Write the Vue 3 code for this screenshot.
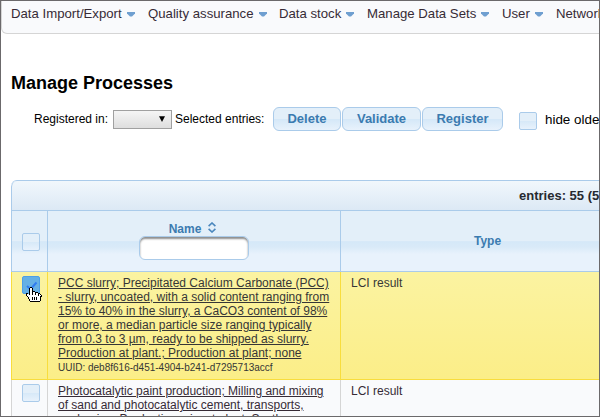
<script setup>
const menu = [
  { label: 'Data Import/Export', w: 137 },
  { label: 'Quality assurance', w: 131 },
  { label: 'Data stock', w: 88 },
  { label: 'Manage Data Sets', w: 135 },
  { label: 'User', w: 54 },
  { label: 'Network', w: 80 },
]
const actions = [
  { label: 'Delete', w: 68 },
  { label: 'Validate', w: 79 },
  { label: 'Register', w: 81 },
]
const rows = [
  {
    selected: true,
    lines: [
      'PCC slurry; Precipitated Calcium Carbonate (PCC)',
      '- slurry, uncoated, with a solid content ranging from',
      '15% to 40% in the slurry, a CaCO3 content of 98%',
      'or more, a median particle size ranging typically',
      'from 0.3 to 3 µm, ready to be shipped as slurry.',
      'Production at plant.; Production at plant; none',
    ],
    uuid: 'deb8f616-d451-4904-b241-d7295713accf',
    type: 'LCI result',
  },
  {
    selected: false,
    lines: [
      'Photocatalytic paint production; Milling and mixing',
      'of sand and photocatalytic cement, transports,',
      'packaging; Production mix, at plant; Synthe',
    ],
    uuid: '',
    type: 'LCI result',
  },
]

// Pointer bitmap: '#' is the outline, 'o' the fill
const pointer = [
  '....##..........',
  '...#oo#.........',
  '...#oo#.........',
  '...#oo#.........',
  '...#oo###.......',
  '...#oo#oo###....',
  '##.#oo#oo#oo##..',
  '#oo#oo#oo#oo#o#.',
  '#ooooooooooo#oo#',
  '.#oooooooooooo##',
  '..#ooo#o#o#ooo#.',
  '..#ooo#o#o#ooo#.',
  '...#oo#o#o#ooo#.',
  '...#oooooooooo#.',
  '....##########..',
]
const pixels = pointer.flatMap((line, y) =>
  [...line].flatMap((c, x) => (c === '.' ? [] : [{ x, y, fill: c === '#' ? '#000' : '#fff' }])),
)
</script>

<template>
  <div class="window">
    <nav class="menubar">
      <a v-for="m in menu" :key="m.label" class="item" :style="{ width: m.w + 'px' }">
        <span>{{ m.label }}</span>
        <svg width="8" height="5" viewBox="0 0 8 5"><path d="M0 0H8V1.4L5 4.5H3L0 1.4Z" fill="#6f9fd0" /></svg>
      </a>
    </nav>
    <h1>Manage Processes</h1>
    <div class="toolbar">
      <span class="label">Registered in:</span>
      <span class="select"><svg width="6" height="6" viewBox="0 0 6 6"><path d="M0 0.2H6L3 6Z" /></svg></span>
      <span class="label selected-label">Selected entries:</span>
      <div class="actions">
        <button v-for="a in actions" :key="a.label" :style="{ width: a.w + 'px' }">{{ a.label }}</button>
      </div>
      <span class="check"></span>
      <span class="hide">hide older</span>
    </div>
    <section class="table">
      <div class="caption"><span>entries: 55 (55)</span></div>
      <div class="row head">
        <div class="cell pick"><span class="check"></span></div>
        <div class="cell name">
          <div class="title">
            <span>Name</span>
            <svg width="8" height="11" viewBox="0 0 8 11" fill="none" stroke="#4b87bd" stroke-width="1.6"><path d="M0.6 4.2L4 1L7.4 4.2M0.6 6.8L4 10L7.4 6.8" /></svg>
          </div>
          <input type="text" />
        </div>
        <div class="cell type">Type</div>
      </div>
      <div v-for="(r, i) in rows" :key="i" class="row body" :class="{ on: r.selected }">
        <div class="cell pick">
          <span class="check">
            <svg v-if="r.selected" class="tick" width="12" height="10" viewBox="0 0 12 10"><path d="M1 5L4.5 8.2L10.5 1.5" fill="none" stroke="#2f7cf0" stroke-width="2" /></svg>
            <svg v-if="r.selected" class="hand" width="16" height="15" viewBox="0 0 16 15" shape-rendering="crispEdges">
              <rect v-for="p in pixels" :key="p.x + '-' + p.y" :x="p.x" :y="p.y" width="1" height="1" :fill="p.fill" />
            </svg>
          </span>
        </div>
        <div class="cell name">
          <a><span v-for="l in r.lines" :key="l">{{ l }}</span></a>
          <small v-if="r.uuid">UUID: {{ r.uuid }}</small>
        </div>
        <div class="cell type">{{ r.type }}</div>
      </div>
    </section>
  </div>
</template>

<style>
body { margin: 0; background: #fff; }
</style>

<style scoped>
* { box-sizing: border-box; }
.window {
  width: 600px; height: 417px; overflow: hidden; background: #fff;
  border: 1px solid #6b696b;
  font-family: "Liberation Sans", Arial, sans-serif; color: #000;
}
.menubar {
  display: flex; width: 660px; height: 33px; padding: 4px 0 0 9px;
  background: #f9fafc; border: 1px solid #d5d5d5; border-top: 0;
  border-radius: 0 0 0 6px;
}
.item {
  display: flex; flex: none; align-items: center; gap: 5px; height: 17px;
  font-size: 13.2px; color: #362b36; white-space: nowrap;
}
.item svg { flex: none; margin-top: 1px; }
h1 { margin: 37px 0 0 10px; font-size: 18px; line-height: 24px; font-weight: bold; }
.toolbar {
  display: flex; align-items: center; width: 700px; height: 26px;
  margin-top: 11px; padding-left: 33px; white-space: nowrap;
}
.label { width: 79px; font-size: 12px; line-height: 16px; }
.selected-label { width: 98px; margin-left: 3px; }
.select {
  display: flex; align-items: center; justify-content: flex-end;
  width: 59px; height: 19px; padding-right: 6px; border: 1px solid #a0a0a0;
  background: linear-gradient(#f5f5f5, #dedede);
}
.actions { display: flex; gap: 1px; }
button {
  height: 24px; padding: 0; border: 1px solid #aacbea; border-radius: 6px;
  background: linear-gradient(#e3eff9 0 48%, #d5e8f8 52%, #e8f2fc);
  color: #3b7bb0; font: bold 13px/20px "Liberation Sans", Arial, sans-serif;
}
.check {
  position: relative; display: block; flex: none; width: 18px; height: 18px;
  border: 1px solid #aacbea; border-radius: 2px;
  background: linear-gradient(#e3eff9 0 48%, #d7e9f8 52%, #e8f2fc);
}
.toolbar .check { margin: 3px 0 0 16px; }
.hide { margin: 1px 0 0 8px; font-size: 13.4px; }
.table {
  width: 954px; margin: 48px 0 0 10px; border: 1px solid #aacbea; border-radius: 6px 0 0 0;
  border-left: 0; overflow: hidden;
}
.caption {
  height: 29px; padding: 6px 0 0 508px; border-left: 1px solid #aacbea; border-radius: 6px 0 0;
  background: linear-gradient(#f1f7fc, #dce9f5);
  font: bold 13px/18px "Liberation Sans", Arial, sans-serif; color: #262a30;
}
.caption span { margin-left: -1px; }
.row { display: grid; grid-template-columns: 36px 293px 1fr; }
.cell { border-left: 1px solid #d5d5d5; }
.head {
  height: 62px; border: solid #aacbea; border-width: 1px 0;
  background: linear-gradient(#e3eff9 0 50%, #d5e8f8 51%, #d9eaf8 60%, #e8f2fc 72%);
}
.head .cell { border-color: #aacbea; color: #3b7bb0; font-weight: bold; font-size: 12px; line-height: 14px; }
.head .pick { padding: 22px 0 0 10px; }
.head .name { display: flex; flex-direction: column; align-items: center; padding-top: 11px; }
.title { display: flex; align-items: center; gap: 7px; height: 14px; margin-left: -3px; }
.title svg { margin-top: -3px; }
.head input {
  width: 110px; height: 24px; margin: 0; border: 1px solid #aacbea; border-radius: 6px;
  background: #fff; box-shadow: inset 0 2px 2px #8e8e8e;
}
.head .type { padding: 23px 0 0 133px; }
.body {
  color: #362b36; background: #f9fafc; font-size: 12px; line-height: 14px;
}
.body .pick { padding: 4px 0 0 10px; }
.body .name { padding: 4px 0 0 10px; white-space: nowrap; }
.body a span { display: block; text-decoration: underline; }
.body small { display: block; font-size: 10px; line-height: 15px; }
.body .type { padding: 4px 0 0 10px; }
.on {
  height: 108px; border-bottom: 1px solid #f8dd3d; color: #363636;
  background: linear-gradient(#fbf3a1, #fbee88);
}
.on .cell { border-color: #f8dd3d; }
.on .check { background: #65b0e5; border-color: #4e9fe8; }
.tick { position: absolute; left: 3px; top: 4px; }
.hand { position: absolute; left: 3px; top: 10px; }
</style>
